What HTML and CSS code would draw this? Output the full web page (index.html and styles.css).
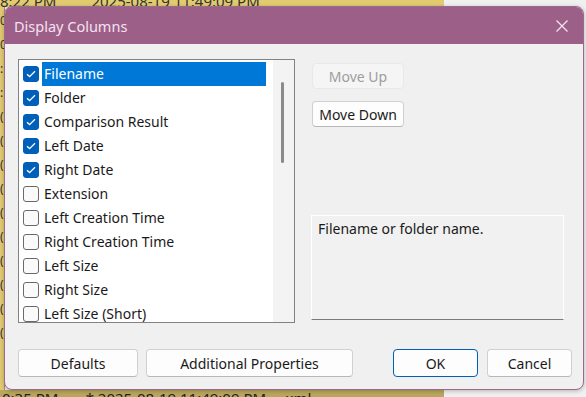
FILE: index.html
```html
<!DOCTYPE html>
<html lang="en">
<head>
    <meta charset="UTF-8">
    <title>Display Columns</title>
    <link rel="stylesheet" href="styles.css">
</head>
<body>
    <div class="desktop">
        <div class="bg-row bg-top">8:22 PM &nbsp; &nbsp; &nbsp; &nbsp; 2025-08-19 11:49:09 PM</div>
        <div class="bg-side">
            <span>0</span><span>0</span><span>:</span><span>:</span><span>(</span><span>(</span><span>(</span><span>(</span><span>(</span><span>(</span><span>(</span><span>(</span><span>(</span><span>(</span>
        </div>
        <div class="bg-row bg-bottom">0:35 PM &nbsp; &nbsp; &nbsp; * 2025-08-19 11:49:09 PM &nbsp; &nbsp; xml</div>
    </div>

    <div class="dialog">
        <div class="titlebar">
            <span class="title">Display Columns</span>
            <svg class="close" width="12" height="12" viewBox="0 0 12 12">
                <path d="M0.5 0.5 L11.5 11.5 M11.5 0.5 L0.5 11.5" stroke="#f6e6f2" stroke-width="1.2" fill="none"/>
            </svg>
        </div>

        <div class="content">
            <div class="listbox">
                <div id="items" class="items"></div>
                <div class="scroll"><div class="thumb"></div></div>
            </div>

            <div class="side">
                <button class="btn disabled">Move Up</button>
                <button class="btn">Move Down</button>
                <div class="desc">Filename or folder name.</div>
            </div>
        </div>

        <div class="footer">
            <div class="footer-left">
                <button class="btn wide-1">Defaults</button>
                <button class="btn wide-2">Additional Properties</button>
            </div>
            <div class="footer-right">
                <button class="btn action default">OK</button>
                <button class="btn action">Cancel</button>
            </div>
        </div>
    </div>

    <script>
        const columns = [
            { name: 'Filename', on: true },
            { name: 'Folder', on: true },
            { name: 'Comparison Result', on: true },
            { name: 'Left Date', on: true },
            { name: 'Right Date', on: true },
            { name: 'Extension', on: false },
            { name: 'Left Creation Time', on: false },
            { name: 'Right Creation Time', on: false },
            { name: 'Left Size', on: false },
            { name: 'Right Size', on: false },
            { name: 'Left Size (Short)', on: false }
        ];

        const checkSvg = '<svg width="10" height="8" viewBox="0 0 10 8"><path d="M1 4.2 L3.6 6.6 L9 1.2" stroke="#fff" stroke-width="1.3" fill="none"/></svg>';

        const items = document.getElementById('items');
        columns.forEach((col, i) => {
            const row = document.createElement('div');
            row.classList.add('row');
            row.innerHTML = `
                <span class="check ${col.on ? 'on' : ''}">${col.on ? checkSvg : ''}</span>
                <span class="label ${i === 0 ? 'selected' : ''}">${col.name}</span>
            `;
            items.appendChild(row);
        });
    </script>
</body>
</html>
```

FILE: styles.css
```css
* {
    margin: 0;
    padding: 0;
    box-sizing: border-box;
}

body {
    width: 586px;
    height: 397px;
    overflow: hidden;
    position: relative;
    background-color: #f0f0f0;
    font-family: 'Noto Sans', 'Open Sans', sans-serif;
    font-size: 14px;
    color: #1a1a1a;
}

/* desktop behind the dialog */
.desktop {
    height: 100%;
    display: flex;
    flex-direction: column;
}

.bg-row {
    height: 7px;
    font-size: 15px;
    overflow: hidden;
    white-space: nowrap;
    color: #333;
}

.bg-top {
    width: 444px;
    background-color: #e3cc70;
    line-height: 0px;
    padding-top: 1px;
}

.bg-side {
    flex: 1;
    width: 5px;
    background-color: #e2ca72;
    border-right: 1px solid #c08080;
    display: flex;
    flex-direction: column;
    overflow: hidden;
    font-size: 12px;
    line-height: 24px;
    color: #333;
    padding-top: 2px;
}

.bg-bottom {
    width: 444px;
    background-color: #b9a75c;
    line-height: 17px;
    padding-left: 2px;
    color: #222;
}

/* dialog window */
.dialog {
    position: absolute;
    left: 4px;
    top: 6px;
    width: 580px;
    height: 384px;
    background-color: #f0f0f0;
    border: 1px solid #9a6a8c;
    border-radius: 8px;
    overflow: hidden;
    box-shadow: 0 1px 4px rgba(0,0,0,0.25);
}

.titlebar {
    height: 37px;
    background-color: #9c6088;
    display: flex;
    align-items: center;
    justify-content: space-between;
    padding: 0 15px 0 9px;
}

.title {
    color: #f6e0f0;
    font-size: 14.5px;
}

.content {
    display: flex;
    gap: 17px;
    padding: 15px 0 0 13px;
}

.listbox {
    width: 277px;
    height: 264px;
    border: 1px solid #828282;
    background-color: #fff;
    display: flex;
}

.items {
    flex: 1;
    padding: 2px 0 0 4px;
    overflow: hidden;
}

.row {
    height: 24px;
    display: flex;
    align-items: center;
    gap: 3px;
}

.check {
    width: 16px;
    height: 16px;
    border: 1px solid #6a6a6a;
    border-radius: 3px;
    background-color: #fafafa;
    display: flex;
    align-items: center;
    justify-content: center;
    flex-shrink: 0;
}

.check.on {
    background-color: #005fb8;
    border-color: #005fb8;
}

.label {
    height: 24px;
    line-height: 24px;
    padding: 0 2px;
    white-space: nowrap;
}

.label.selected {
    width: 224px;
    background-color: #0078d7;
    color: #fff;
}

.scroll {
    width: 21px;
    background-color: #f3f3f3;
    position: relative;
}

.thumb {
    position: absolute;
    left: 8px;
    top: 22px;
    width: 3px;
    height: 81px;
    border-radius: 2px;
    background-color: #8a8a8a;
}

.side {
    display: flex;
    flex-direction: column;
    align-items: flex-start;
    padding-top: 4px;
}

.btn {
    font-family: inherit;
    font-size: 14px;
    color: #1a1a1a;
    background-color: #fdfdfd;
    border: 1px solid #d0d0d0;
    border-bottom-color: #b8b8b8;
    border-radius: 4px;
    height: 26px;
    width: 92px;
}

.side .btn {
    margin-bottom: 12px;
}

.btn.disabled {
    background-color: #f5f5f5;
    border-color: #e8e8e8;
    color: #9d9d9d;
}

.desc {
    margin-top: 76px;
    margin-left: -1px;
    width: 253px;
    height: 105px;
    border: 1px solid #fff;
    border-bottom-color: #7a7a7a;
    padding: 3px 6px;
    background-color: #f1f1f1;
}

.footer {
    display: flex;
    justify-content: space-between;
    padding: 26px 11px 0 13px;
}

.footer-left,
.footer-right {
    display: flex;
    gap: 8px;
}

.footer-right {
    gap: 9px;
}

.footer .btn {
    height: 28px;
}

.wide-1 {
    width: 120px;
}

.wide-2 {
    width: 207px;
}

.action {
    width: 85px;
}

.action.default {
    border: 1px solid #005fb8;
}
```
